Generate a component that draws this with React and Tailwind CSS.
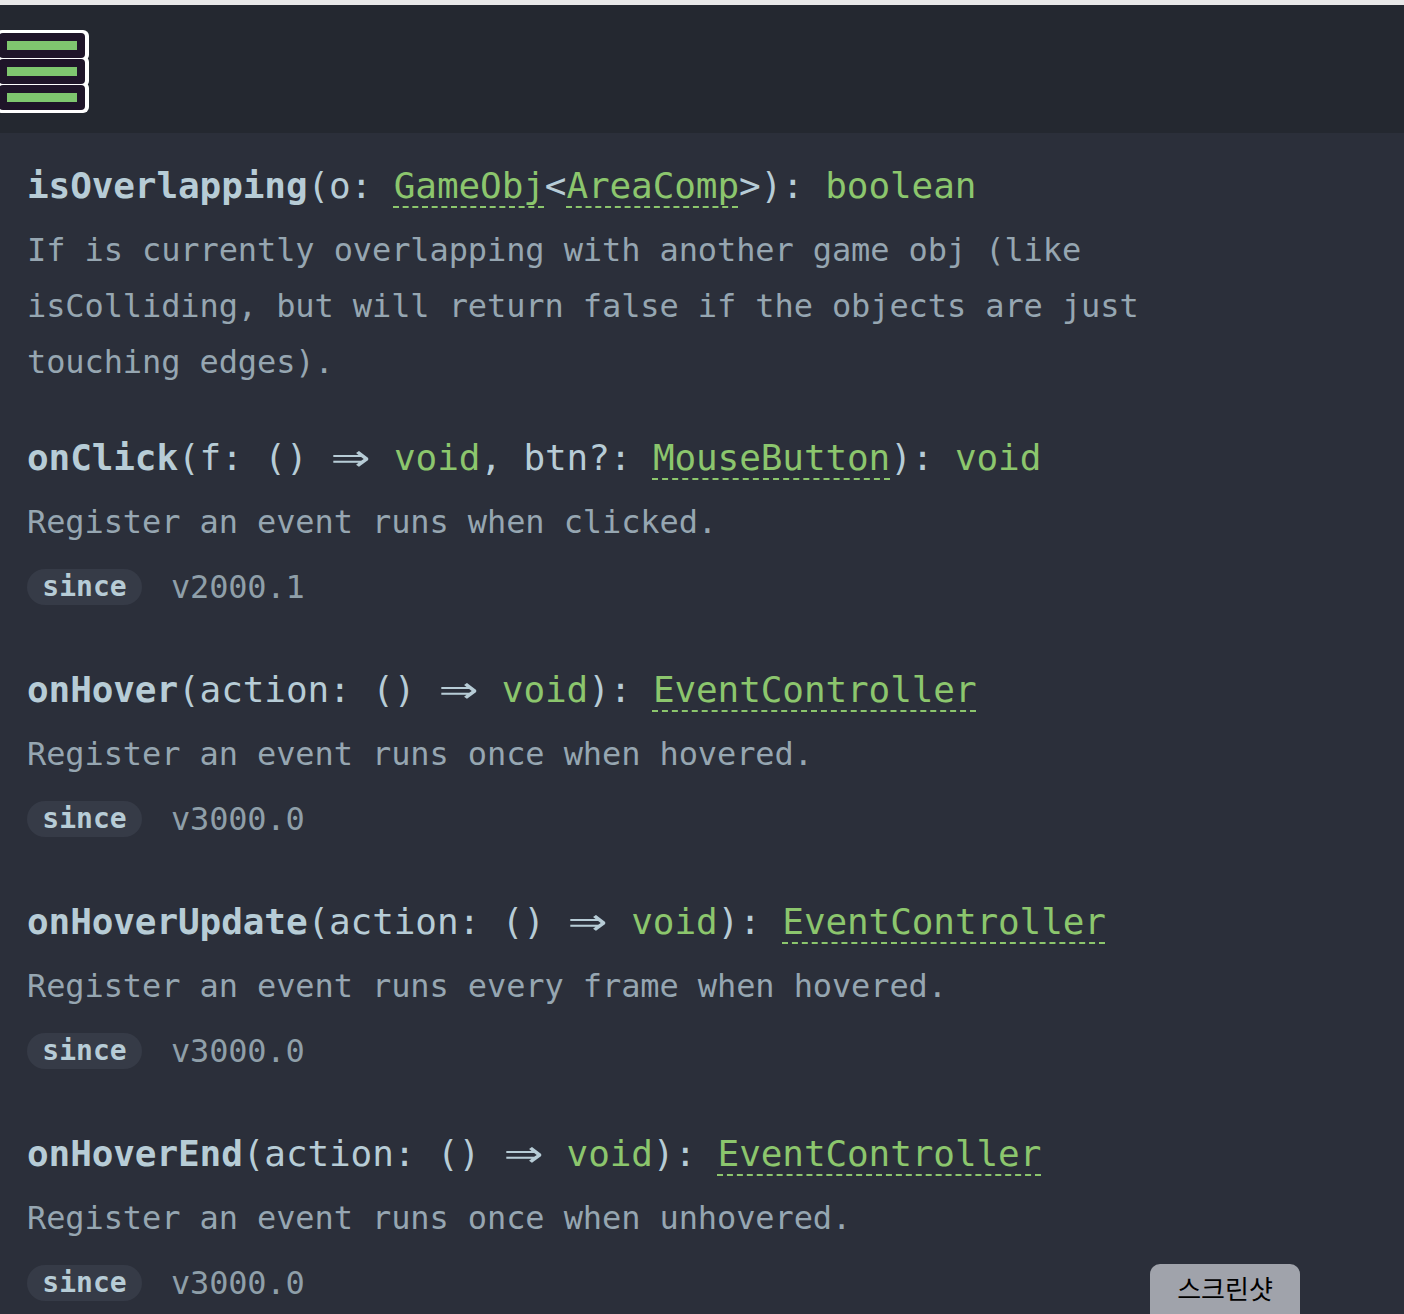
import React from "react";

const MONO = "font-['DejaVu_Sans_Mono','Liberation_Mono',monospace]";

function Arrow() {
    return (
        <span className="inline-block w-[2ch] text-center">
            <span className="inline-block scale-x-[1.8] scale-y-[1.35] -translate-y-[2px]">⇒</span>
        </span>
    );
}

function TypeLink({ children }) {
    return (
        <span className="text-[#8cc66d] underline decoration-dashed decoration-2 underline-offset-[8px]">
            {children}
        </span>
    );
}

function Green({ children }) {
    return <span className="text-[#8cc66d]">{children}</span>;
}

function Since({ version }) {
    return (
        <div className="mt-[19px] flex items-center h-[36px]">
            <span className="h-[36px] w-[115px] rounded-full bg-[#363b47] flex items-center justify-center text-[28px] font-bold text-[#b7ccd6]">
                since
            </span>
            <span className="ml-[29px] text-[32px] tracking-[-0.2px] text-[#8f9fa9]">{version}</span>
        </div>
    );
}

function Entry({ name, sig, desc, since }) {
    return (
        <div className={since ? "mb-[61px]" : "mb-[44px]"}>
            <div className="h-[48px] leading-[48px] text-[36px] tracking-[-0.1px] text-[#b7ccd6] whitespace-nowrap">
                <span className="font-bold">{name}</span>
                {sig}
            </div>
            <p className="mt-[12px] max-w-[1180px] text-[32px] leading-[56px] tracking-[-0.1px] text-[#96a6b1]">{desc}</p>
            {since && <Since version={since} />}
        </div>
    );
}

function Logo() {
    const rows = [0, 1, 2];
    return (
        <svg width="92" height="86" viewBox="0 0 92 86">
            {rows.map((i) => (
                <rect key={"w" + i} x="-4" y={1 + 26 * i} width="93" height="31" rx="6" fill="#ffffff" />
            ))}
            {rows.map((i) => (
                <rect key={"d" + i} x="-1" y={4 + 26 * i} width="86" height="25" rx="4" fill="#1f1529" />
            ))}
            {rows.map((i) => (
                <rect key={"g" + i} x="7" y={12 + 26 * i} width="70" height="9" fill="#7fc66f" />
            ))}
        </svg>
    );
}

export default function App() {
    return (
        <div className={`relative h-[1314px] overflow-hidden bg-[#2b2f3a] ${MONO}`}>
            <div className="h-[5px] bg-[#e8e8e8]" />
            <header className="h-[128px] bg-[#242830] pt-[24px]">
                <Logo />
            </header>

            <main className="pl-[27px] pt-[29px]">
                <Entry
                    name="isOverlapping"
                    sig={
                        <>
                            (o: <TypeLink>GameObj</TypeLink>&lt;<TypeLink>AreaComp</TypeLink>&gt;): <Green>boolean</Green>
                        </>
                    }
                    desc="If is currently overlapping with another game obj (like isColliding, but will return false if the objects are just touching edges)."
                />
                <Entry
                    name="onClick"
                    sig={
                        <>
                            (f: () <Arrow /> <Green>void</Green>, btn?: <TypeLink>MouseButton</TypeLink>): <Green>void</Green>
                        </>
                    }
                    desc="Register an event runs when clicked."
                    since="v2000.1"
                />
                <Entry
                    name="onHover"
                    sig={
                        <>
                            (action: () <Arrow /> <Green>void</Green>): <TypeLink>EventController</TypeLink>
                        </>
                    }
                    desc="Register an event runs once when hovered."
                    since="v3000.0"
                />
                <Entry
                    name="onHoverUpdate"
                    sig={
                        <>
                            (action: () <Arrow /> <Green>void</Green>): <TypeLink>EventController</TypeLink>
                        </>
                    }
                    desc="Register an event runs every frame when hovered."
                    since="v3000.0"
                />
                <Entry
                    name="onHoverEnd"
                    sig={
                        <>
                            (action: () <Arrow /> <Green>void</Green>): <TypeLink>EventController</TypeLink>
                        </>
                    }
                    desc="Register an event runs once when unhovered."
                    since="v3000.0"
                />
            </main>

            <button className="absolute left-[1150px] top-[1264px] h-[60px] w-[150px] rounded-[10px] bg-[#a0a3ab] pb-[14px] text-[26px] text-black font-['Noto_Sans_CJK_KR',sans-serif]">
                스크린샷
            </button>
        </div>
    );
}
